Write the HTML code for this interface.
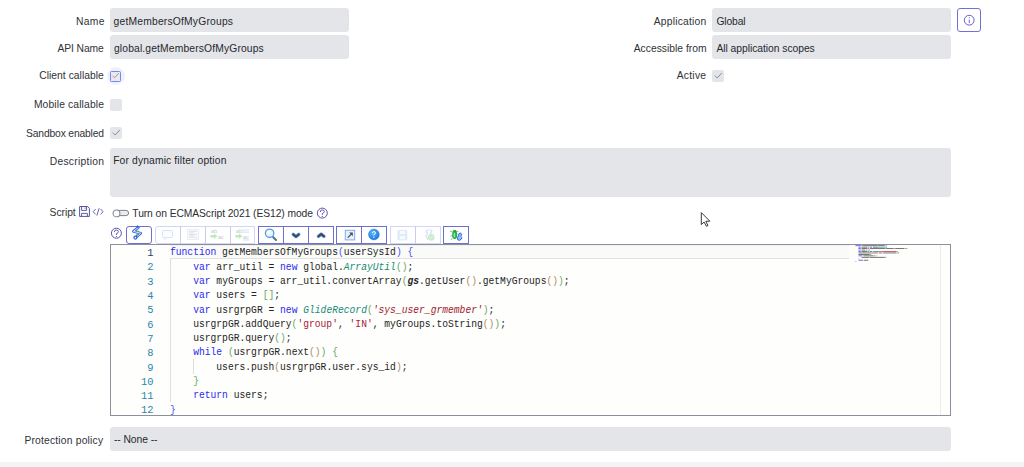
<!DOCTYPE html>
<html><head><meta charset="utf-8">
<style>
*{box-sizing:border-box}
html,body{margin:0;padding:0;background:#fff;width:1024px;height:467px;overflow:hidden;position:relative}
body{font-family:"Liberation Sans",sans-serif;font-size:10.5px;color:#2e3137}
.a{position:absolute}
.t{position:absolute;white-space:nowrap;line-height:12px;height:12px;font-size:10.3px}
.inp{position:absolute;background:#e4e5e9;border-radius:3px;white-space:nowrap;padding-left:4px;color:#2b2e33}
.cb{position:absolute;width:12px;height:12px;background:#e4e5e9;border-radius:2px}
.cb svg{position:absolute;left:0;top:0}
.tb{position:absolute;top:226px;height:17.5px;border:1px solid #6d70cc;background:#fff}
.tbl{border-color:#d5d6f3}
.btn{position:absolute;top:0;height:100%}
.code{position:absolute;left:110px;top:244px;width:841px;height:172px;border:1px solid #8b909c;background:#fefefc;overflow:hidden}
.ln{position:absolute;left:0;width:42.5px;text-align:right;font-family:"Liberation Mono",monospace;font-size:10.4px;line-height:14.31px;color:#2a86ad}
.cl{position:absolute;left:58.8px;font-family:"Liberation Mono",monospace;font-size:11px;line-height:14.31px;white-space:pre;color:#242424;transform:scaleX(0.8773);transform-origin:0 0}
.k{color:#2a2af0}
.c{color:#188a78;font-style:italic}
.s{color:#a8213a}
.si{color:#a01a2e;font-style:italic}
.b0{color:#4c58f0}
.b1{color:#67a86a}
.b2{color:#b08a62}
</style></head><body>

<!-- labels left column -->

<!-- labels right column -->

<!-- inputs -->
<div class="inp" style="left:110px;top:8px;width:239px;height:24px;"></div>
<div class="inp" style="left:110px;top:35px;width:239px;height:24px;"></div>
<div class="inp" style="left:712px;top:8px;width:239px;height:24px;"></div>
<div class="inp" style="left:712px;top:35px;width:239px;height:24px;"></div>
<div class="inp" style="left:110px;top:148px;width:841px;height:48.5px;"></div>
<div class="inp" style="left:110px;top:427px;width:841px;height:24px;"></div>

<!-- texts -->
<div class="t" style="left:76.1px;top:15.7px;letter-spacing:0.267px;color:#2e3238">Name</div>
<div class="t" style="left:57.6px;top:42.6px;letter-spacing:-0.114px;color:#2e3238">API Name</div>
<div class="t" style="left:39.2px;top:69.8px;letter-spacing:0.039px;color:#2e3238">Client callable</div>
<div class="t" style="left:33.9px;top:98.6px;letter-spacing:0.136px;color:#2e3238">Mobile callable</div>
<div class="t" style="left:26.1px;top:127.5px;letter-spacing:-0.161px;color:#2e3238">Sandbox enabled</div>
<div class="t" style="left:49.7px;top:155.8px;letter-spacing:0.280px;color:#2e3238">Description</div>
<div class="t" style="left:49.6px;top:207.0px;letter-spacing:-0.040px;color:#2e3238">Script</div>
<div class="t" style="left:24.4px;top:435.2px;letter-spacing:0.194px;color:#2e3238">Protection policy</div>
<div class="t" style="left:653.7px;top:15.6px;letter-spacing:0.220px;color:#2e3238">Application</div>
<div class="t" style="left:633.7px;top:43.1px;letter-spacing:0.014px;color:#2e3238">Accessible from</div>
<div class="t" style="left:676.7px;top:69.9px;letter-spacing:0.260px;color:#2e3238">Active</div>
<div class="t" style="left:132.3px;top:208.1px;letter-spacing:-0.079px;color:#2a2d33">Turn on ECMAScript 2021 (ES12) mode</div>
<div class="t" style="left:113.6px;top:15.9px;letter-spacing:0.200px;color:#25282d">getMembersOfMyGroups</div>
<div class="t" style="left:114.0px;top:42.6px;letter-spacing:0.146px;color:#25282d">global.getMembersOfMyGroups</div>
<div class="t" style="left:716.4px;top:15.7px;letter-spacing:-0.120px;color:#25282d">Global</div>
<div class="t" style="left:716.4px;top:42.6px;letter-spacing:-0.033px;color:#25282d">All application scopes</div>
<div class="t" style="left:113.9px;top:433.8px;letter-spacing:-0.044px;color:#25282d">-- None --</div>
<div class="t" style="left:113.2px;top:155.4px;letter-spacing:0.137px;color:#25282d">For dynamic filter option</div>

<!-- info button -->
<div class="a" style="left:957px;top:8px;width:24px;height:24px;border:1.1px solid #6e71d6;border-radius:3px;background:#fff">
<svg class="a" style="left:0;top:0" width="22" height="22" viewBox="0 0 22 22"><circle cx="11.2" cy="11.2" r="4.9" fill="none" stroke="#5e58c8" stroke-width="0.95"/><rect x="10.8" y="10.7" width="0.9" height="3.4" fill="#5e58c8"/><circle cx="11.25" cy="8.7" r="0.55" fill="#5e58c8"/></svg>
</div>

<!-- checkboxes -->
<div class="a" style="left:107px;top:67px;width:18px;height:18px;border-radius:9px;background:rgba(120,140,255,0.12)"></div>
<div class="cb" style="left:110.3px;top:70.5px;width:11px;height:11px;border:1.2px solid #7389f2;background:#e9e9ee;border-radius:1.5px"><svg width="9" height="9" viewBox="0 0 9 9" style="position:absolute;left:-0.2px;top:-0.2px"><path d="M1.6 5 L3.6 6.8 L7.8 2.2" fill="none" stroke="#86868f" stroke-width="0.85"/></svg></div>
<div class="cb" style="left:110px;top:99px"></div>
<div class="cb" style="left:110px;top:127px"><svg width="12" height="12" viewBox="0 0 12 12"><path d="M2.8 5.6 L5.2 8 L9.8 3" fill="none" stroke="#7a7a90" stroke-width="0.85"/></svg></div>
<div class="cb" style="left:712px;top:70px"><svg width="12" height="12" viewBox="0 0 12 12"><path d="M2.8 5.6 L5.2 8 L9.8 3" fill="none" stroke="#7a7a90" stroke-width="0.85"/></svg></div>

<!-- script icons -->
<svg class="a" style="left:79px;top:206px" width="12" height="12" viewBox="0 0 12 12"><path d="M0.6 0.5 H8.6 L10.4 2.4 V10.4 H0.6 Z" fill="none" stroke="#4f4c9e" stroke-width="0.95" stroke-linejoin="round"/><path d="M2.6 0.5 V4.4 H7.6 V0.5" fill="none" stroke="#4f4c9e" stroke-width="0.9"/><path d="M6 1.4 V2.9" stroke="#4f4c9e" stroke-width="0.8"/><path d="M2.6 10.4 V7.4 H8.4 V10.4" fill="none" stroke="#4f4c9e" stroke-width="0.9"/></svg>
<svg class="a" style="left:92px;top:207px" width="12" height="10" viewBox="0 0 12 10"><path d="M3.6 2 L1.2 4.7 L3.6 7.4 M8.6 2 L11 4.7 L8.6 7.4 M7.2 1.2 L4.8 8.6" fill="none" stroke="#5550a8" stroke-width="0.9"/></svg>

<!-- toggle -->
<svg class="a" style="left:111px;top:208px" width="20" height="11" viewBox="0 0 20 11"><rect x="3" y="2.4" width="14.6" height="5.2" rx="2.6" fill="#ebecef" stroke="#7d828c" stroke-width="1"/><circle cx="5.5" cy="5.4" r="3.4" fill="#fff" stroke="#838892" stroke-width="1.1"/></svg>
<svg class="a" style="left:316px;top:207px" width="13" height="13" viewBox="0 0 13 13"><circle cx="6.3" cy="6.1" r="5" fill="none" stroke="#5a52ae" stroke-width="1"/><path d="M4.3 5 Q4.3 2.9 6.3 2.9 Q8.3 2.9 8.3 4.6 Q8.3 5.8 6.3 6.5 V7.9" fill="none" stroke="#5a52ae" stroke-width="0.95"/><circle cx="6.3" cy="9.4" r="0.6" fill="#5a52ae"/></svg>

<!-- toolbar help -->
<svg class="a" style="left:110px;top:227px" width="13" height="13" viewBox="0 0 13 13"><circle cx="6.4" cy="6.2" r="5" fill="none" stroke="#5a52ae" stroke-width="1"/><path d="M4.4 5.1 Q4.4 3 6.4 3 Q8.4 3 8.4 4.7 Q8.4 5.9 6.4 6.6 V8" fill="none" stroke="#5a52ae" stroke-width="0.95"/><circle cx="6.4" cy="9.5" r="0.6" fill="#5a52ae"/></svg>

<!-- toolbar -->
<div class="tb" style="left:126px;width:25.5px;border-radius:3px"></div>
<div class="tb tbl" style="left:155px;width:100px;border-radius:3px 0 0 3px"></div>
<div class="tb" style="left:258px;width:75.5px"></div>
<div class="tb" style="left:336px;width:51px"></div>
<div class="tb tbl" style="left:390px;width:50.5px"></div>
<div class="tb" style="left:443px;width:26px"></div>

<!-- dividers -->
<div class="a" style="left:180px;top:226px;width:1px;height:17.5px;background:#cbcbef"></div>
<div class="a" style="left:205px;top:226px;width:1px;height:17.5px;background:#cbcbef"></div>
<div class="a" style="left:230px;top:226px;width:1px;height:17.5px;background:#cbcbef"></div>
<div class="a" style="left:283px;top:226px;width:1px;height:17.5px;background:#6d70cc"></div>
<div class="a" style="left:308px;top:226px;width:1px;height:17.5px;background:#6d70cc"></div>
<div class="a" style="left:361px;top:226px;width:1px;height:17.5px;background:#6d70cc"></div>
<div class="a" style="left:415px;top:226px;width:1px;height:17.5px;background:#cbcbef"></div>
<!-- code editor -->
<div class="code">
<div class="a" style="left:59px;top:0;width:679px;height:14px;border-bottom:1px solid #e2e2e2;border-top:1px solid #efefef;background:#fafaf8"></div>
<div class="a" style="left:59px;top:14px;width:1px;height:143px;background:#dedede"></div>
<div class="a" style="left:82px;top:114px;width:1px;height:15px;background:#dedede"></div>
<div class="a" style="left:829px;top:0;width:1px;height:172px;background:#ececec"></div>
<div class="ln" style="top:1px"><span style="color:#2a426e">1</span><br>2<br>3<br>4<br>5<br>6<br>7<br>8<br>9<br>10<br>11<br>12</div>
<div class="cl" style="top:0.3px"><span class="k">function</span> getMembersOfMyGroups<span class="b0">(</span>userSysId<span class="b0">)</span> <span class="b0">{</span>
    <span class="k">var</span> arr_util = <span class="k">new</span> global.<span class="c">ArrayUtil</span><span class="b1">()</span>;
    <span class="k">var</span> myGroups = arr_util.convertArray<span class="b1">(</span><b><i>gs</i></b>.getUser<span class="b2">()</span>.getMyGroups<span class="b2">()</span><span class="b1">)</span>;
    <span class="k">var</span> users = <span class="b1">[]</span>;
    <span class="k">var</span> usrgrpGR = <span class="k">new</span> <span class="c">GlideRecord</span><span class="b1">(</span><span class="si">'sys_user_grmember'</span><span class="b1">)</span>;
    usrgrpGR.addQuery<span class="b1">(</span><span class="s">'group'</span>, <span class="s">'IN'</span>, myGroups.toString<span class="b2">()</span><span class="b1">)</span>;
    usrgrpGR.query<span class="b1">()</span>;
    <span class="k">while</span> <span class="b1">(</span>usrgrpGR.next<span class="b2">()</span><span class="b1">)</span> <span class="b1">{</span>
        users.push<span class="b2">(</span>usrgrpGR.user.sys_id<span class="b2">)</span>;
    <span class="b1">}</span>
    <span class="k">return</span> users;
<span class="b0">}</span></div>
</div>


<!-- bottom strip -->
<div class="a" style="left:0;top:462px;width:1024px;height:5px;background:#f4f4f6"></div>
<svg class="a" style="left:0;top:0;pointer-events:none" width="1024" height="467" viewBox="0 0 1024 467">
<!-- 1 format -->
<path d="M138.4 227.4 L133.4 231.4 L140.8 233.2 L135.8 237.4" fill="none" stroke="#3b6ae6" stroke-width="2.7" stroke-linejoin="round" stroke-linecap="round"/>
<path d="M138.4 227.4 L133.4 231.4 L140.8 233.2 L135.8 237.4" fill="none" stroke="#dfe9ff" stroke-width="1" stroke-linejoin="round"/>
<circle cx="137.5" cy="226.6" r="1" fill="#2a4fd0"/>
<circle cx="135.4" cy="237.6" r="1.5" fill="#fff" stroke="#2d5fe0" stroke-width="1.2"/>
<path d="M136.6 231.4 H139 M136.4 234.5 H139" stroke="#3ec24a" stroke-width="1.1"/>
<path d="M138.4 233.2 H140.2" stroke="#f07a7a" stroke-width="1.1"/>
<!-- 2 comment (disabled) -->
<path d="M163.5 230.5 H171.5 Q172.5 230.5 172.5 231.5 V236.5 Q172.5 237.5 171.5 237.5 H166.5 L165 239.5 L165 237.5 H163.5 Q162.5 237.5 162.5 236.5 V231.5 Q162.5 230.5 163.5 230.5 Z" fill="#fbfdff" stroke="#d3e1f4" stroke-width="0.9"/>
<!-- 3 list (disabled) -->
<rect x="187.5" y="229.5" width="11" height="10" fill="#fafbff" stroke="#e3e9f7" stroke-width="0.8"/>
<path d="M189 231.4 H197 M189 232.9 H193.5 M189 234.3 H197 M189 235.8 H194 M189 237.3 H197" stroke="#d9d9d9" stroke-width="0.8"/>
<!-- 4 ab->ac (disabled) -->
<text x="211" y="233.4" font-family="Liberation Sans" font-size="5.6" fill="#c8c8c8">ab</text>
<path d="M210.5 235 H214 V233.6 L217.5 236.2 L214 238.8 V237.4 H210.5 Z" fill="#b8ecb8"/>
<text x="218" y="239" font-family="Liberation Sans" font-size="5.6" fill="#c8c8c8">ac</text>
<!-- 5 replace all (disabled) -->
<text x="236" y="233.4" font-family="Liberation Sans" font-size="5.6" fill="#c8c8c8">ab</text>
<path d="M242 230 H249 M242 232.2 H249" stroke="#d7e6f7" stroke-width="1.2"/>
<path d="M235.5 235 H239 V233.6 L242.5 236.2 L239 238.8 V237.4 H235.5 Z" fill="#b8ecb8"/>
<text x="243" y="239" font-family="Liberation Sans" font-size="5.6" fill="#c8c8c8">ac</text>
<path d="M243 240 H249" stroke="#c7dcf4" stroke-width="0.8"/>
<!-- 6 search -->
<path d="M273 237 L276 240" stroke="#56708e" stroke-width="2" stroke-linecap="round"/>
<circle cx="269.6" cy="233.3" r="4.2" fill="#e6f3ff" stroke="#5b9ee0" stroke-width="1.3"/>
<circle cx="268.8" cy="232.4" r="1.8" fill="#fff" opacity="0.8"/>
<!-- 7 chevron down -->
<path d="M293.2 234.4 L296 236.7 L298.8 234.4" fill="none" stroke="#79ade8" stroke-width="3.4" stroke-linecap="round" stroke-linejoin="round"/>
<path d="M293.2 234.4 L296 236.7 L298.8 234.4" fill="none" stroke="#3a4a5e" stroke-width="2.1" stroke-linecap="round" stroke-linejoin="round"/>
<!-- 8 chevron up -->
<path d="M318.4 236.4 L321.2 234.1 L324 236.4" fill="none" stroke="#79ade8" stroke-width="3.4" stroke-linecap="round" stroke-linejoin="round"/>
<path d="M318.4 236.4 L321.2 234.1 L324 236.4" fill="none" stroke="#3a4a5e" stroke-width="2.1" stroke-linecap="round" stroke-linejoin="round"/>
<!-- 9 expand -->
<rect x="345.3" y="230.3" width="9.4" height="9.6" fill="#e8f0fd" stroke="#86a9e6" stroke-width="1"/>
<path d="M347.8 237.6 L352 233.4" stroke="#3d4e63" stroke-width="1.3"/>
<path d="M349.2 232.6 H352.8 V236.2 Z" fill="#3d4e63"/>
<!-- 10 help -->
<defs><radialGradient id="hg" cx="0.4" cy="0.35" r="0.7"><stop offset="0" stop-color="#5fb4ff"/><stop offset="1" stop-color="#1479e0"/></radialGradient></defs>
<circle cx="373.9" cy="234.5" r="5.4" fill="url(#hg)" stroke="#2f78d4" stroke-width="0.5"/>
<path d="M372.3 233.2 Q372.3 231.6 373.9 231.6 Q375.5 231.6 375.5 233 Q375.5 234 373.9 234.6 V235.5" fill="none" stroke="#fff" stroke-width="0.95"/>
<circle cx="373.9" cy="237.2" r="0.65" fill="#fff"/>
<!-- 11 save (disabled) -->
<rect x="397.9" y="230.3" width="9" height="9.7" rx="1" fill="#dfebf9" stroke="#d3e3f6" stroke-width="0.6"/>
<rect x="399.7" y="230.9" width="5.4" height="3.1" fill="#f7fbff"/>
<rect x="399.7" y="236.1" width="5.4" height="3.3" fill="#f7fbff"/>
<!-- 12 script (disabled) -->
<path d="M428.6 229.4 L426 231.6 L427.6 233.8 L425.9 236 L427.8 239.6 M430 229.6 L432 231 L430.4 233.4 L431.6 234.2" fill="none" stroke="#d6e3f7" stroke-width="1.3" stroke-linejoin="round"/>
<circle cx="431.2" cy="237.4" r="3.3" fill="#cdeccf"/>
<path d="M429.8 237.4 L430.9 238.4 L432.7 236.4" fill="none" stroke="#eef8ee" stroke-width="0.8"/>
<!-- 13 bug -->
<path d="M452.4 231.8 L450.2 231.3 M452.2 235.6 L450.4 236.2 M452.6 238.6 L450.8 239.6 M456.6 231.8 L458.4 231.2" stroke="#3cbf55" stroke-width="0.8"/>
<ellipse cx="454.7" cy="234.9" rx="2.6" ry="4.1" fill="#22b443"/>
<path d="M452.9 230.8 Q454.7 229.2 456.5 230.8 V231.7 H452.9 Z" fill="#1a9a38"/>
<ellipse cx="454.4" cy="235" rx="0.9" ry="2.6" fill="#b8ecc0" opacity="0.8"/>
<path d="M460.6 232.9 Q458 233.2 458.6 235.8 Q456.9 236.8 457.7 239.8 Q459.6 241.2 461.5 239 Q462.3 237.2 460.7 236.2 Q462.8 234.8 460.6 232.9 Z" fill="#9cc0f8" stroke="#2e66e2" stroke-width="1"/>
<!-- minimap -->
<g opacity="0.9"><rect x="855.50" y="245.30" width="6.00" height="0.8" fill="#3535f2"/><rect x="862.25" y="245.30" width="15.00" height="0.8" fill="#444"/><rect x="877.25" y="245.30" width="0.75" height="0.8" fill="#6b6bf5"/><rect x="878.00" y="245.30" width="6.75" height="0.8" fill="#444"/><rect x="884.75" y="245.30" width="0.75" height="0.8" fill="#6b6bf5"/><rect x="886.25" y="245.30" width="0.75" height="0.8" fill="#6b6bf5"/><rect x="858.50" y="246.75" width="2.25" height="0.8" fill="#3535f2"/><rect x="861.50" y="246.75" width="6.00" height="0.8" fill="#444"/><rect x="868.25" y="246.75" width="0.75" height="0.8" fill="#444"/><rect x="869.75" y="246.75" width="2.25" height="0.8" fill="#3535f2"/><rect x="872.75" y="246.75" width="5.25" height="0.8" fill="#444"/><rect x="878.00" y="246.75" width="6.75" height="0.8" fill="#1f8a8a"/><rect x="884.75" y="246.75" width="1.50" height="0.8" fill="#67a86a"/><rect x="886.25" y="246.75" width="0.75" height="0.8" fill="#444"/><rect x="858.50" y="248.20" width="2.25" height="0.8" fill="#3535f2"/><rect x="861.50" y="248.20" width="6.00" height="0.8" fill="#444"/><rect x="868.25" y="248.20" width="0.75" height="0.8" fill="#444"/><rect x="869.75" y="248.20" width="15.75" height="0.8" fill="#444"/><rect x="885.50" y="248.20" width="0.75" height="0.8" fill="#67a86a"/><rect x="886.25" y="248.20" width="7.50" height="0.8" fill="#444"/><rect x="893.75" y="248.20" width="1.50" height="0.8" fill="#b08a62"/><rect x="895.25" y="248.20" width="9.00" height="0.8" fill="#444"/><rect x="904.25" y="248.20" width="1.50" height="0.8" fill="#b08a62"/><rect x="905.75" y="248.20" width="0.75" height="0.8" fill="#67a86a"/><rect x="906.50" y="248.20" width="0.75" height="0.8" fill="#444"/><rect x="858.50" y="249.65" width="2.25" height="0.8" fill="#3535f2"/><rect x="861.50" y="249.65" width="3.75" height="0.8" fill="#444"/><rect x="866.00" y="249.65" width="0.75" height="0.8" fill="#444"/><rect x="867.50" y="249.65" width="1.50" height="0.8" fill="#67a86a"/><rect x="869.00" y="249.65" width="0.75" height="0.8" fill="#444"/><rect x="858.50" y="251.10" width="2.25" height="0.8" fill="#3535f2"/><rect x="861.50" y="251.10" width="6.00" height="0.8" fill="#444"/><rect x="868.25" y="251.10" width="0.75" height="0.8" fill="#444"/><rect x="869.75" y="251.10" width="2.25" height="0.8" fill="#3535f2"/><rect x="872.75" y="251.10" width="8.25" height="0.8" fill="#1f8a8a"/><rect x="881.00" y="251.10" width="0.75" height="0.8" fill="#67a86a"/><rect x="881.75" y="251.10" width="14.25" height="0.8" fill="#b0283f"/><rect x="896.00" y="251.10" width="0.75" height="0.8" fill="#67a86a"/><rect x="896.75" y="251.10" width="0.75" height="0.8" fill="#444"/><rect x="858.50" y="252.55" width="12.75" height="0.8" fill="#444"/><rect x="871.25" y="252.55" width="0.75" height="0.8" fill="#67a86a"/><rect x="872.00" y="252.55" width="5.25" height="0.8" fill="#b0283f"/><rect x="877.25" y="252.55" width="0.75" height="0.8" fill="#444"/><rect x="878.75" y="252.55" width="3.00" height="0.8" fill="#b0283f"/><rect x="881.75" y="252.55" width="0.75" height="0.8" fill="#444"/><rect x="883.25" y="252.55" width="12.75" height="0.8" fill="#444"/><rect x="896.00" y="252.55" width="1.50" height="0.8" fill="#b08a62"/><rect x="897.50" y="252.55" width="0.75" height="0.8" fill="#67a86a"/><rect x="898.25" y="252.55" width="0.75" height="0.8" fill="#444"/><rect x="858.50" y="254.00" width="10.50" height="0.8" fill="#444"/><rect x="869.00" y="254.00" width="1.50" height="0.8" fill="#67a86a"/><rect x="870.50" y="254.00" width="0.75" height="0.8" fill="#444"/><rect x="858.50" y="255.45" width="3.75" height="0.8" fill="#3535f2"/><rect x="863.00" y="255.45" width="0.75" height="0.8" fill="#67a86a"/><rect x="863.75" y="255.45" width="9.75" height="0.8" fill="#444"/><rect x="873.50" y="255.45" width="1.50" height="0.8" fill="#b08a62"/><rect x="875.00" y="255.45" width="0.75" height="0.8" fill="#67a86a"/><rect x="876.50" y="255.45" width="0.75" height="0.8" fill="#67a86a"/><rect x="861.50" y="256.90" width="7.50" height="0.8" fill="#444"/><rect x="869.00" y="256.90" width="0.75" height="0.8" fill="#b08a62"/><rect x="869.75" y="256.90" width="15.00" height="0.8" fill="#444"/><rect x="884.75" y="256.90" width="0.75" height="0.8" fill="#b08a62"/><rect x="885.50" y="256.90" width="0.75" height="0.8" fill="#444"/><rect x="858.50" y="258.35" width="0.75" height="0.8" fill="#67a86a"/><rect x="858.50" y="259.80" width="4.50" height="0.8" fill="#3535f2"/><rect x="863.75" y="259.80" width="4.50" height="0.8" fill="#444"/><rect x="855.50" y="261.25" width="0.75" height="0.8" fill="#6b6bf5"/></g>
<!-- cursor -->
<path d="M701.3 212.6 L701.3 224.6 L704.1 222 L706.4 226.3 L708 225.5 L705.8 221.3 L709.9 221.2 Z" fill="#fff" stroke="#22242e" stroke-width="0.9" stroke-linejoin="round"/>
</svg>
</body></html>
